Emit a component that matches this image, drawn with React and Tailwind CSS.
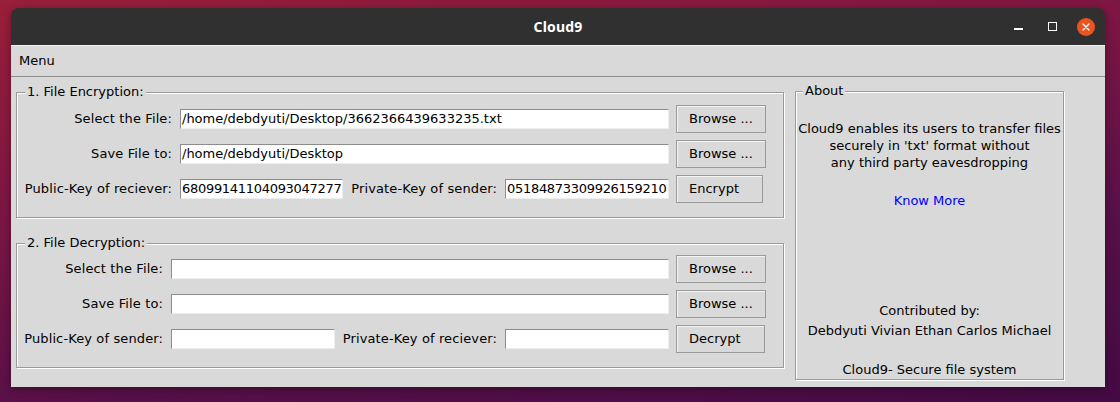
import React from "react";

function Entry({ w, value, digits }) {
  return (
    <div
      className={`${w} h-[20px] shrink-0 bg-white border border-t-[#8c8c8c] border-l-[#8c8c8c] border-b-[#ededed] border-r-[#ededed] pl-[1px] leading-[18px] overflow-hidden whitespace-nowrap ${digits ? "tracking-[-0.3px]" : ""}`}
    >
      {value}
    </div>
  );
}

function Label({ w, children }) {
  return (
    <div className={`${w} shrink-0 pr-[8px] text-right whitespace-nowrap leading-[18px] tracking-[0.12px]`}>
      {children}
    </div>
  );
}

function Btn({ w, children }) {
  return (
    <div
      className={`${w} h-[28px] ml-[7px] shrink-0 flex items-center justify-start pl-[12px] bg-[#d9d9d9] border border-[#9a9a9a] shadow-[inset_1px_1px_0_#f4f4f4] leading-[18px] whitespace-nowrap`}
    >
      {children}
    </div>
  );
}

function Row({ children, className = "" }) {
  return <div className={`flex items-center h-[28px] ${className}`}>{children}</div>;
}

export default function App() {
  return (
    <div className="w-[1120px] h-[402px] overflow-hidden bg-[linear-gradient(170deg,#991f3a_0%,#7d1643_35%,#561048_70%,#440a43_100%)] pl-[11px] pt-[8px] font-['DejaVu_Sans',sans-serif] text-[13px] text-black">
      <div className="w-[1094px] h-[379px] flex flex-col shadow-[0_2px_8px_rgba(0,0,0,0.35)] rounded-t-[8px]">
        {/* Title bar */}
        <div className="h-[37px] shrink-0 bg-[#303030] rounded-t-[8px] grid grid-cols-[1fr_auto_1fr] items-center">
          <div />
          <div className="font-['Noto_Sans',sans-serif] font-bold text-[14px] text-white tracking-[0.2px]">
            Cloud9
          </div>
          <div className="flex items-center justify-end pr-[10px]">
            <div className="w-[9px] h-[1.5px] bg-white mt-[5px]" />
            <div className="w-[9px] h-[9px] border border-white ml-[25px]" />
            <div className="w-[18px] h-[18px] rounded-full bg-[#e95420] ml-[20px] flex items-center justify-center">
              <svg width="8" height="8" viewBox="0 0 8 8">
                <path d="M1 1 L7 7 M7 1 L1 7" stroke="white" strokeWidth="1.4" strokeLinecap="round" />
              </svg>
            </div>
          </div>
        </div>
        {/* Menu bar */}
        <div className="h-[32px] shrink-0 bg-[#d9d9d9] border-t border-t-[#f2f2f2] border-b border-b-[#8a8a8a] flex items-center pl-[8px]">
          Menu
        </div>
        {/* Body */}
        <div className="flex-1 bg-[#d9d9d9] flex pl-[5px] gap-[11px]">
          <div className="w-[768px] shrink-0 flex flex-col">
            <fieldset className="mt-[7px] border border-[#9a9a9a] shadow-[1px_1px_0_#fff,inset_1px_1px_0_#fff] pt-[5px] pb-[14px]">
              <legend className="ml-[8px] px-[2px] leading-[16px] bg-[#d9d9d9]">1. File Encryption:</legend>
              <Row>
                <Label w="w-[163px]">Select the File:</Label>
                <Entry w="w-[489px]" value="/home/debdyuti/Desktop/3662366439633235.txt" />
                <Btn w="w-[90px]">Browse ...</Btn>
              </Row>
              <Row className="mt-[7px]">
                <Label w="w-[163px]">Save File to:</Label>
                <Entry w="w-[489px]" value="/home/debdyuti/Desktop" />
                <Btn w="w-[90px]">Browse ...</Btn>
              </Row>
              <Row className="mt-[7px]">
                <Label w="w-[163px]">Public-Key of reciever:</Label>
                <Entry w="w-[163px]" value="68099141104093047277" digits />
                <Label w="w-[162px]">Private-Key of sender:</Label>
                <Entry w="w-[164px]" value="05184873309926159210" digits />
                <Btn w="w-[87px]">Encrypt</Btn>
              </Row>
            </fieldset>
            <fieldset className="mt-[17px] border border-[#9a9a9a] shadow-[1px_1px_0_#fff,inset_1px_1px_0_#fff] pt-[4px] pb-[14px]">
              <legend className="ml-[8px] px-[2px] leading-[16px] bg-[#d9d9d9]">2. File Decryption:</legend>
              <Row>
                <Label w="w-[154px]">Select the File:</Label>
                <Entry w="w-[498px]" value="" />
                <Btn w="w-[90px]">Browse ...</Btn>
              </Row>
              <Row className="mt-[7px]">
                <Label w="w-[154px]">Save File to:</Label>
                <Entry w="w-[498px]" value="" />
                <Btn w="w-[90px]">Browse ...</Btn>
              </Row>
              <Row className="mt-[7px]">
                <Label w="w-[154px]">Public-Key of sender:</Label>
                <Entry w="w-[164px]" value="" />
                <Label w="w-[170px]">Private-Key of reciever:</Label>
                <Entry w="w-[164px]" value="" />
                <Btn w="w-[89px]">Decrypt</Btn>
              </Row>
            </fieldset>
          </div>
          <fieldset className="mt-[6px] w-[269px] h-[297px] shrink-0 border border-[#9a9a9a] shadow-[1px_1px_0_#fff,inset_1px_1px_0_#fff]">
            <legend className="ml-[7px] px-[2px] leading-[16px] bg-[#d9d9d9]">About</legend>
            <div className="flex flex-col items-center text-center leading-[17px] whitespace-nowrap">
              <div className="mt-[21px]">
                <div>Cloud9 enables its users to transfer files</div>
                <div>securely in 'txt' format without</div>
                <div>any third party eavesdropping</div>
              </div>
              <div className="mt-[21px] text-[#0000ff]">Know More</div>
              <div className="mt-[93px]">Contributed by:</div>
              <div className="mt-[3px]">Debdyuti Vivian Ethan Carlos Michael</div>
              <div className="mt-[22px]">Cloud9- Secure file system</div>
            </div>
          </fieldset>
        </div>
      </div>
    </div>
  );
}
